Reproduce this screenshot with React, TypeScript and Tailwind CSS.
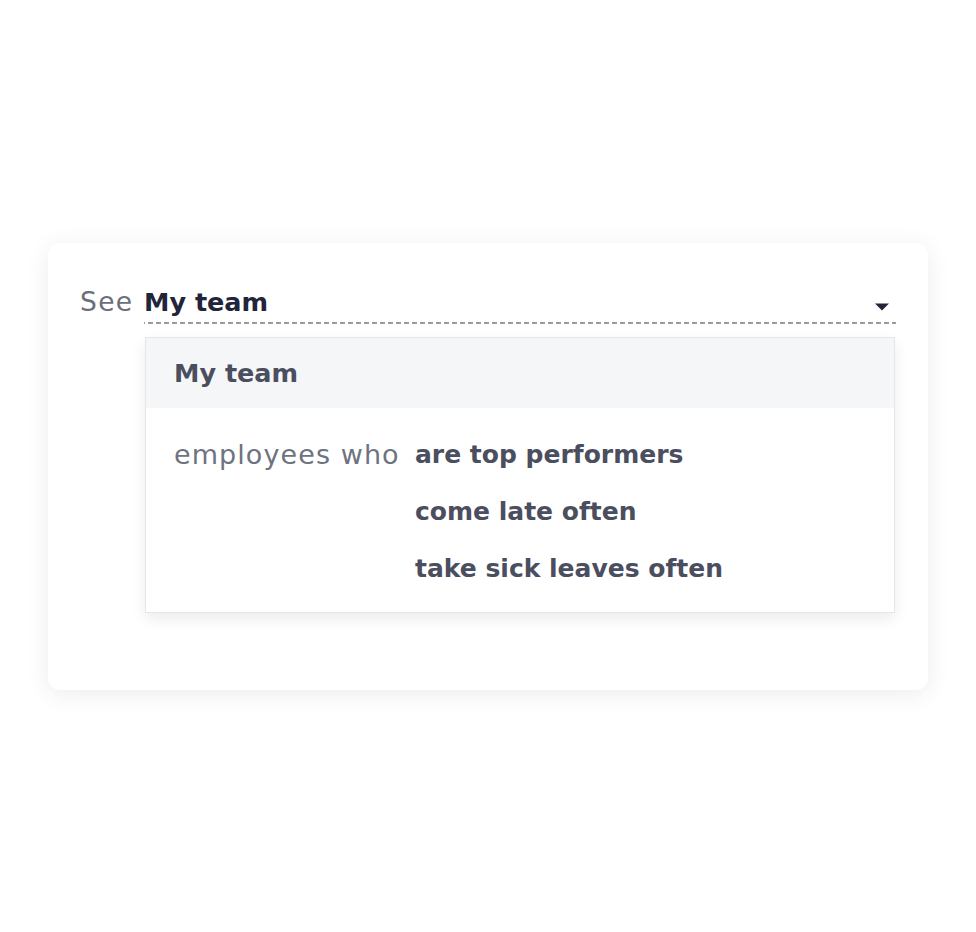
import { useState } from "react";

const options = ["are top performers", "come late often", "take sick leaves often"];

export default function App() {
  const [picked] = useState("My team");

  return (
    <div className="min-h-screen bg-white pt-[243px] px-12 font-['DejaVu_Sans',sans-serif]">
      <div className="h-[447px] rounded-xl bg-white shadow-[0_4px_24px_rgba(0,0,0,0.08)] px-8 pt-[41px]">
        <div className="flex items-end">
          <span className="w-[64px] text-[26.5px] tracking-[0.05em] leading-[36px] pb-[4px] text-[#6b6e7b]">See</span>
          <div className="flex-1 flex items-center justify-between pb-[4px] bg-[linear-gradient(to_right,#9c9c9c_5px,transparent_5px)] bg-[length:8px_2px] bg-repeat-x bg-bottom">
            <span className="text-[25.5px] leading-[36px] font-bold text-[#22243a]">{picked}</span>
            <svg width="16" height="10" viewBox="0 0 16 10" className="mr-[6px] mt-[10px]">
              <path d="M1 1.5h14l-7 7z" fill="#22243a" />
            </svg>
          </div>
        </div>
        <div className="ml-[65px] mr-px mt-[13px] border border-[#e6e6e8] bg-white shadow-[0_6px_14px_rgba(0,0,0,0.08)]">
          <div className="h-[70px] bg-[#f5f6f8] px-7 flex items-center text-[25.5px] font-bold text-[#4b4e5e]">
            My team
          </div>
          <div className="flex px-7 pt-[18px] pb-[15px]">
            <div className="w-[241px] text-[27px] tracking-[0.04em] leading-[57px] text-[#6f7280]">employees who</div>
            <div className="flex flex-col">
              {options.map((o) => (
                <div key={o} className="text-[25px] leading-[57px] font-bold text-[#4b4e5e]">
                  {o}
                </div>
              ))}
            </div>
          </div>
        </div>
      </div>
    </div>
  );
}
